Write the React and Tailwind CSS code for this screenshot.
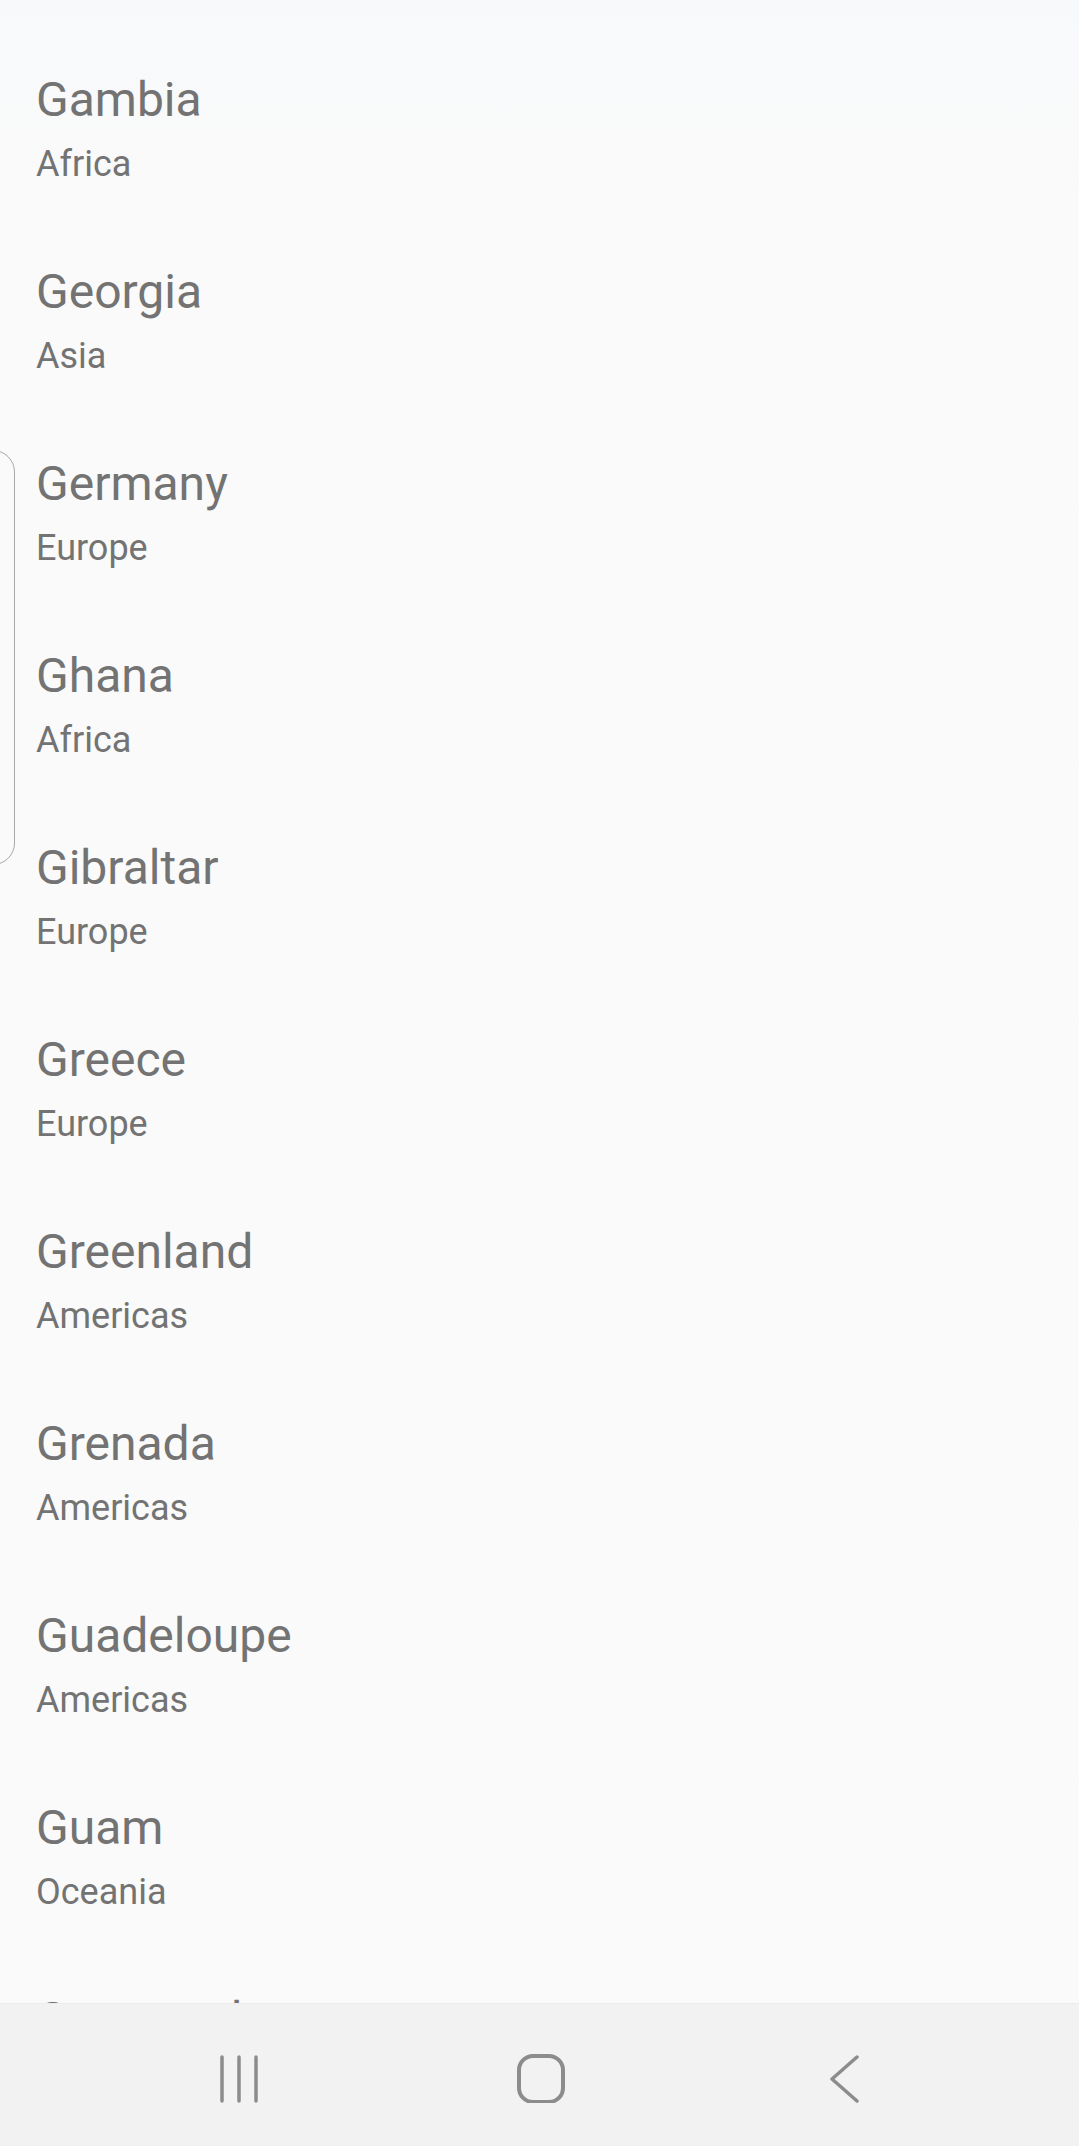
import React from 'react';

const countries = [
  { name: 'Gambia', region: 'Africa' },
  { name: 'Georgia', region: 'Asia' },
  { name: 'Germany', region: 'Europe' },
  { name: 'Ghana', region: 'Africa' },
  { name: 'Gibraltar', region: 'Europe' },
  { name: 'Greece', region: 'Europe' },
  { name: 'Greenland', region: 'Americas' },
  { name: 'Grenada', region: 'Americas' },
  { name: 'Guadeloupe', region: 'Americas' },
  { name: 'Guam', region: 'Oceania' },
  { name: 'Guatemala', region: 'Americas' },
];

const NavBar = () => (
  <div className="h-[143px] shrink-0 bg-[#f2f2f2] border-t border-[#ececec] flex items-start pt-[49px] pl-[218px]">
    {/* recent apps */}
    <svg width="44" height="50" viewBox="0 0 44 50" fill="none" stroke="#8c8c8c" strokeWidth="3.5" strokeLinecap="round">
      <path d="M4 4v44M21 4v44M38 4v44" />
    </svg>
    {/* home */}
    <svg className="ml-[254px]" width="50" height="50" viewBox="0 0 50 50" fill="none" stroke="#8c8c8c" strokeWidth="4">
      <rect x="3" y="3" width="44" height="46" rx="14" />
    </svg>
    {/* back */}
    <svg className="ml-[263px]" width="30" height="50" viewBox="0 0 30 50" fill="none" stroke="#8c8c8c" strokeWidth="3.5" strokeLinecap="round" strokeLinejoin="round">
      <path d="M28 4L3 26L28 48" />
    </svg>
  </div>
);

const App = () => {
  return (
    <div
      className="relative w-[1079px] h-[2146px] flex flex-col overflow-hidden bg-gradient-to-b from-[#f8f9fb] to-[#fafafa] to-[200px]"
      style={{ fontFamily: 'Roboto, "Noto Sans", sans-serif' }}
    >
      <div className="flex-1 overflow-hidden pt-[32px]">
        {countries.map((c) => (
          <div key={c.name} className="h-[192px] pt-[40px] pl-[36px]">
            <div className="text-[48px] leading-[56px] text-[#737373]">{c.name}</div>
            <div className="mt-[15px] text-[36px] leading-[42px] text-[#737373]">{c.region}</div>
          </div>
        ))}
      </div>

      {/* index scroller handle */}
      <div className="absolute left-[-30px] top-[450px] w-[45px] h-[415px] rounded-r-[22px] border-[1.5px] border-[#a8a8a8]" />

      <NavBar />
    </div>
  );
};

export default App;
